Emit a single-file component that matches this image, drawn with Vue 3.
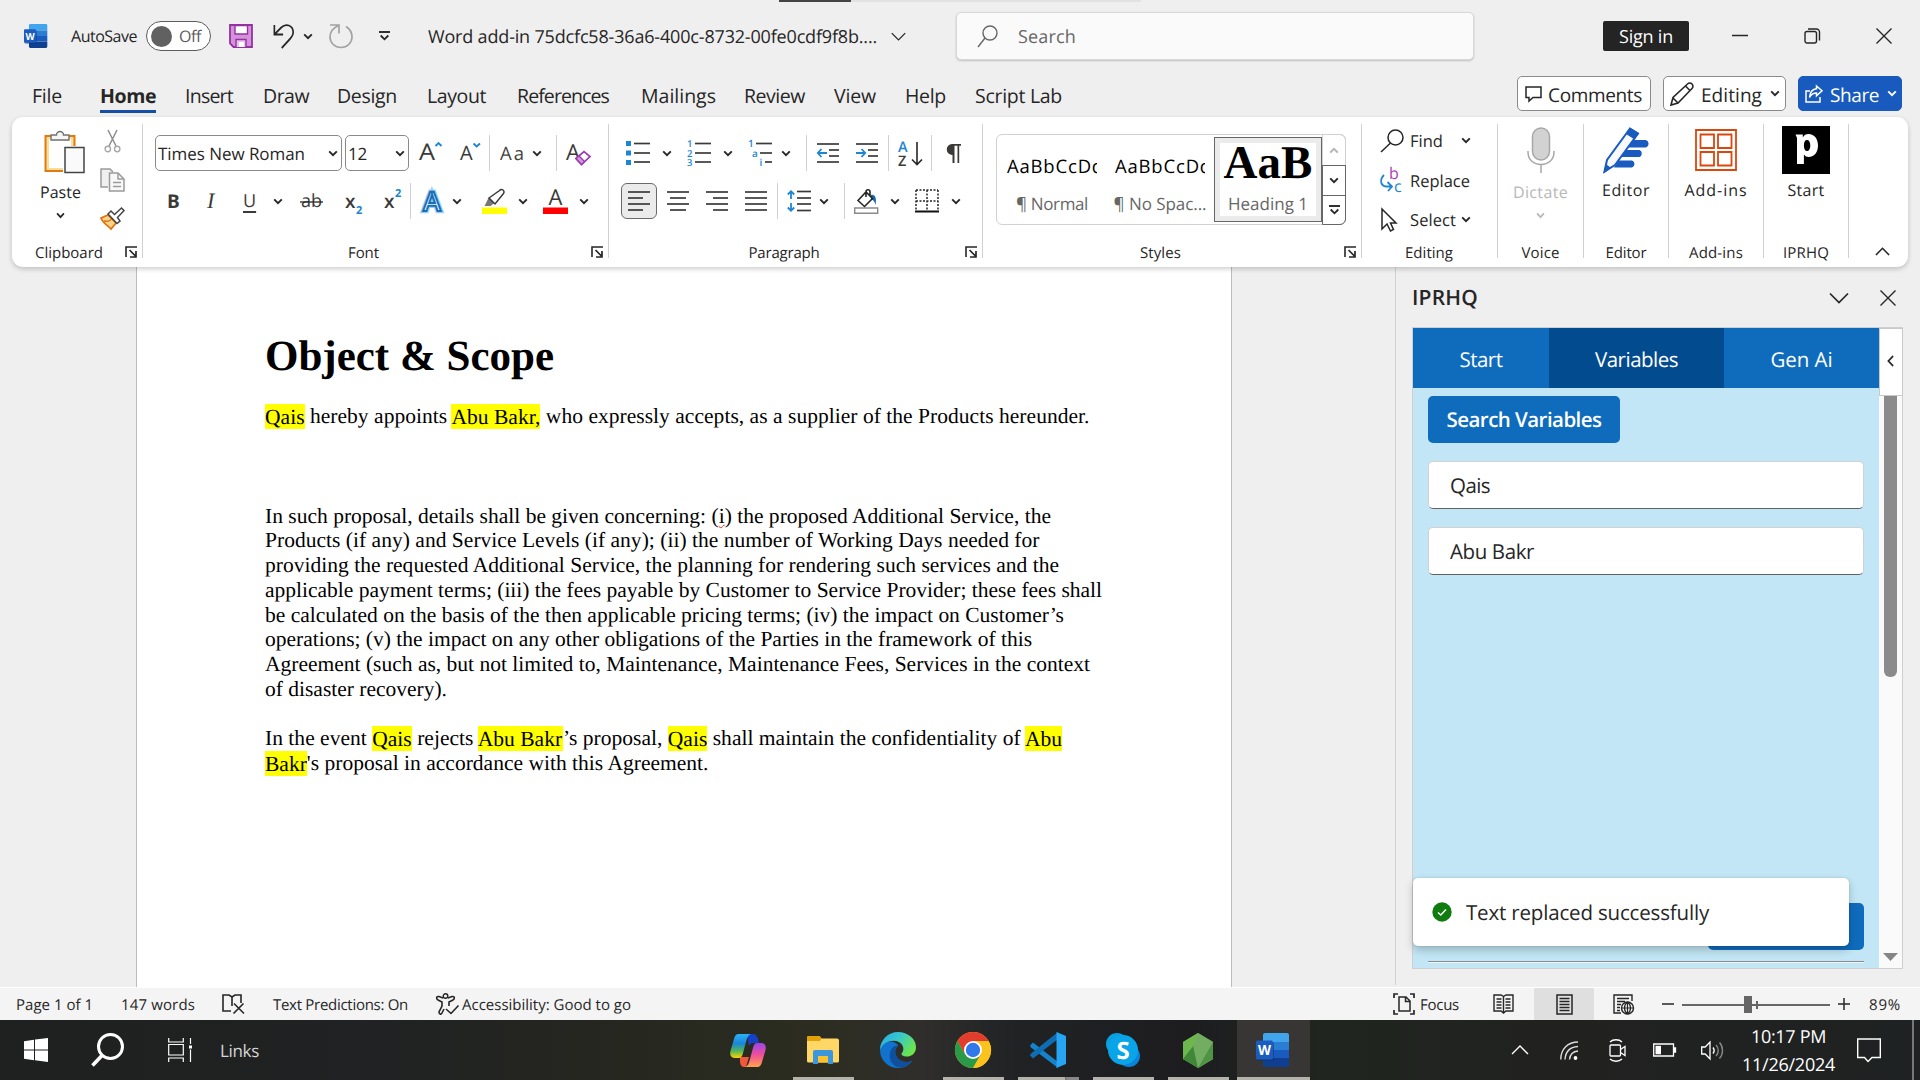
<script setup>
import { h } from 'vue'

// Spreads a label's letters so that it fills the given width.
const vFit = {
  mounted(el, { value }) {
    const width = el.getBoundingClientRect().width
    el.style.letterSpacing = (value - width) / el.textContent.length + 'px'
  }
}

const bars = (rows) => rows.map(([x1, x2, y]) => `<path d="M${x1} ${y}H${x2}" stroke="#3b3a39" stroke-width="1.7"/>`).join('')
const sans = 'font-family="Open Sans, Noto Sans, sans-serif" stroke="none"'
const wordLogo = `<g stroke="none"><path d="M9 0h22a2 2 0 0 1 2 2v7H7V2a2 2 0 0 1 2-2z" fill="#41a5ee"/><path d="M7 9h26v8H7z" fill="#2b7cd3"/><path d="M7 17h26v8H7z" fill="#185abd"/><path d="M7 25h26v7a2 2 0 0 1-2 2H9a2 2 0 0 1-2-2z" fill="#103f91"/><rect x="1" y="9" width="17" height="19" rx="1.5" fill="#0b2f6e" opacity=".5"/><rect x="0" y="7.500" width="17" height="19" rx="1.500" fill="#1b5cbe"/></g><text x="8.500" y="22" text-anchor="middle" font-weight="700" font-size="14" textLength="13" lengthAdjust="spacingAndGlyphs" fill="#fff" ${sans}>W</text>`

const icons = {
  chev: ['10 7', '<path d="M1.200 1.300L5 5.200L8.800 1.300" stroke-width="1.900"/>'],
  wide: ['20 12', '<path d="M1 1.500L10 10.500L19 1.500" stroke-width="1.700"/>'],
  word: ['34 34', wordLogo],
  save: ['24 24', '<path d="M1 1h22v22H4.500L1 19.500z" fill="#d591dc" stroke="#9332a0" stroke-width="1.800"/><path d="M6 1.500h12.500V10H6z" fill="#fff" stroke="#9332a0"/><path d="M7 23v-7.500h10V23" fill="#e9c3ee" stroke="#9332a0"/><path d="M10 18h5v5h-5z" fill="#fff" stroke="none"/>'],
  undo: ['24 24', '<path d="M1.500 1v9.500H11M1.500 10.500L9 3.500C14-1 22 1 22 8.500c0 3-2 5-4 7L9.500 24" stroke-width="1.800"/>'],
  redo: ['24 24', '<path d="M1 1h9v8.500M9.500 1.500C4 4 1 8 1 13c0 6 5 10.500 11 10.500S23 19 23 13c0-4-2-8-6-10.500" stroke-width="1.700"/>'],
  custom: ['11 10', '<path d="M0 1h11" stroke-width="1.900"/><path d="M1.700 4.500L5.500 8.300L9.300 4.500" stroke-width="1.800"/>'],
  search: ['21 23', '<circle cx="13" cy="8" r="7"/><path d="M8 13L1 22"/>'],
  mini: ['16 16', '<path d="M0 7.500h16" stroke-width="1.500"/>'],
  restore: ['16 16', '<rect x="1" y="3.500" width="11.500" height="11.500" rx="2"/><path d="M4 1h8.500a3 3 0 0 1 3 3v8.500"/>'],
  close: ['16 16', '<path d="M.5.5l15 15M15.500.5L.5 15.500"/>'],
  comment: ['17 16', '<path d="M1 1h15v10.500H8L4 15v-3.500H1z" stroke-width="1.500"/>'],
  pencil: ['24 24', '<path d="M1 23l2-7.500L17.500 2a3 3 0 0 1 4.500 4.500L8 21zM15.500 4L20 8.500M3 16l5 5" stroke-width="1.600"/>'],
  share: ['18 18', '<path d="M5 6H1v11h14v-5M11.500 1l5.500 4.700-5.500 5V8C8 8 6 9.500 4.500 12.500 5 7.500 7 4 11.500 3.700z" stroke-width="1.500"/>'],
  paste: ['41 45', '<rect x="1.500" y="7" width="29" height="35" fill="#f8dd9c" stroke="#e27a0d" stroke-width="2"/><rect x="5" y="10" width="22" height="29" fill="#fff" stroke="none"/><path d="M7 11V6h5.500a3.500 3.500 0 0 1 7 0H25v5z" fill="#f6f6f6" stroke="#707070"/><path d="M19 17h22v28H19z" fill="#fff" stroke="none"/><path d="M21 18.500h19v25H21z" fill="#fafafa" stroke="#444" stroke-width="1.500"/>'],
  cut: ['17 24', '<path d="M4 1l8 16M13 1L5 17" stroke="#8c8c8c" stroke-width="1.500"/><circle cx="3.800" cy="20" r="2.700" stroke="#a8a8a8"/><circle cx="13.200" cy="20" r="2.700" stroke="#a8a8a8"/>'],
  copy: ['25 24', '<path d="M8 19H1V1h9l3 3" fill="#f0f0f0" stroke="#9b9b9b" stroke-width="1.500"/><path d="M9.500 5H18l6 6v12H9.500z" fill="#f8f8f8" stroke="#9b9b9b" stroke-width="1.500"/><path d="M18 5v6h6M13 14.500h8M13 18.500h8" stroke="#9b9b9b"/>'],
  painter: ['25 23', '<path d="M1 11l7-3 8 8-5 6C9 19 3 17 1 11z" fill="#f8d48a" stroke="#e2700d" stroke-width="1.700"/><path d="M4 14c5 1 7-1 8-3" stroke="#e2700d"/><path d="M8 7l3-3 3.500 3.500L21.500 1l2.500 2.500-6.500 7L20 14l-3 2.500z" fill="#fff" stroke="#444" stroke-width="1.500"/>'],
  launcher: ['12 12', '<path d="M1 11V1h11" stroke-width="1.600"/><path d="M4.500 4l6.500 6.500M11 5v6H5" stroke-width="1.700"/>'],
  grow: ['23 20', `<text x="0" y="19" font-size="23" fill="#3b3a39" textLength="16" lengthAdjust="spacingAndGlyphs" ${sans}>A</text><path d="M16.500 5L19.500 2L22.500 5" stroke="#1e86d0" stroke-width="1.900"/>`],
  shrink: ['21 20', `<text x="0" y="19" font-size="20" fill="#3b3a39" ${sans}>A</text><path d="M13.500 2.500L16.700 5.500L20 2.500" stroke="#1e86d0" stroke-width="1.900"/>`],
  clear: ['26 25', `<text x="0" y="19" font-size="22" fill="#3b3a39" ${sans}>A</text><path d="M10 17.500L18 10.500l6 5-8.500 8z" fill="#fff" stroke="#9b3bb0" stroke-width="1.700"/><path d="M10 17.500l3-2.500 5.500 5.500-3 3z" fill="#d59ae0" stroke="#9b3bb0"/>`],
  fancyA: ['24 25', `<g text-anchor="middle" font-size="27" font-weight="600" font-family="Open Sans, sans-serif" fill="#fff"><text x="12" y="22" stroke="#9dcdf3" stroke-width="4.500">A</text><text x="12" y="22" stroke="#1570b8" stroke-width="2">A</text></g>`],
  marker: ['25 25', '<path d="M0 18.500h25V25H0z" fill="#ff0" stroke="none"/><path d="M2.500 17l4-8 6 5-4 3z" fill="#777" stroke="none"/><path d="M7 9L17.500 1.500a2.500 2.500 0 0 1 4 3L13 15z" stroke="#3b3a39" stroke-width="1.500" fill="#fff"/>'],
  fontColor: ['25 25', `<path d="M0 18.500h25V25H0z" fill="red" stroke="none"/><text x="12.500" y="16" text-anchor="middle" font-size="22" fill="#3b3a39" ${sans}>A</text>`],
  strike: ['23 20', `<text x="11.500" y="16" text-anchor="middle" font-size="18" fill="#3b3a39" ${sans}>ab</text><path d="M0 11h23" stroke-width="1.300"/>`],
  bullets: ['24 24', '<path d="M0 0h5v5H0zM0 9.500h5v5H0zM0 19h5v5H0z" fill="#1e86d0" stroke="none"/>' + bars([[8, 24, 2.5], [8, 24, 12], [8, 24, 21]])],
  numbers: ['24 26', `<g fill="#1e86d0" font-size="9.500" font-weight="600" ${sans}><text x="0" y="7">1</text><text x="0" y="16.500">2</text><text x="0" y="26">3</text></g>` + bars([[8, 24, 3.5], [8, 24, 13], [8, 24, 22]])],
  levels: ['24 26', `<g fill="#1e86d0" font-size="10" font-weight="600" ${sans}><text x="0" y="7">1</text><text x="4" y="16.500">a</text><text x="11.500" y="26">i</text></g>` + bars([[8, 24, 3.5], [12, 24, 13], [17, 24, 22]])],
  outdent: ['22 20', bars([[0, 22, 1], [12, 22, 7], [12, 22, 13], [0, 22, 19]]) + '<path d="M10 10H1M4.500 6L.8 10l3.700 4" stroke="#1e86d0" stroke-width="1.800"/>'],
  indent: ['22 20', bars([[0, 22, 1], [12, 22, 7], [12, 22, 13], [0, 22, 19]]) + '<path d="M0 10h9M5.500 6l3.700 4-3.700 4" stroke="#1e86d0" stroke-width="1.800"/>'],
  sort: ['25 25', `<g font-size="14.500" font-weight="600" ${sans}><text x="0" y="11" fill="#1e86d0">A</text><text x="0" y="25" fill="#3b3a39">Z</text></g><path d="M19 1v22M14 18.500l5 5 5-5" stroke-width="1.600"/>`],
  pilcrow: ['16 19', '<path d="M7.500 11A5.500 5.500 0 0 1 7 0h9v1.800h-1.800V19H12.500V1.800h-3V19H7.500z" fill="#3b3a39" stroke="none"/>'],
  left: ['22 20', bars([[0, 22, 1], [0, 15, 7], [0, 22, 13], [0, 15, 19]])],
  center: ['22 20', bars([[0, 22, 1], [3, 19, 7], [0, 22, 13], [3, 19, 19]])],
  right: ['22 20', bars([[0, 22, 1], [7, 22, 7], [0, 22, 13], [7, 22, 19]])],
  justify: ['22 20', bars([[0, 22, 1], [0, 22, 7], [0, 22, 13], [0, 22, 19]])],
  spacing: ['24 22', '<path d="M4 1v8M4 13v8M.8 4.500L4 1.200l3.200 3.300M.8 17.500L4 20.800l3.200-3.300" stroke="#1e86d0" stroke-width="1.800"/>' + bars([[10, 24, 1.500], [10, 24, 8], [10, 24, 14], [10, 24, 20.500]])],
  bucket: ['25 25', '<path d="M.7 19h23v5.300h-23z" stroke="#8a8a8a"/><path d="M17 6c4-1 6 3 4.500 10-1-4-2-5-4.500-5.500z" fill="#1669b5" stroke="none"/><path d="M4 11.500l8-8.500 6.500 6.500-8 8zM12 8V3c0-3 4-3 4 0v4" stroke-width="1.600"/>'],
  borders: ['24 24', '<path d="M1 1h22M1 12h22M1 1v21M12 1v21M23 1v21" stroke-dasharray="2 1.500" stroke-width="1.500"/><path d="M0 22.500h24" stroke="#111" stroke-width="2"/>'],
  find: ['24 24', '<circle cx="15.500" cy="8.500" r="7.500" stroke-width="1.500"/><path d="M10.500 14L1 23" stroke-width="1.500"/>'],
  replace: ['22 26', `<text x="9" y="12" font-size="16" fill="#a743b8" ${sans}>b</text><text x="14" y="25" font-size="16" fill="#1e86d0" ${sans}>c</text><path d="M4 8C-1 13 1 19 6 19.500h5M7.500 15l4.500 4.500-4 4.500" stroke="#1e86d0" stroke-width="1.800"/>`],
  select: ['17 24', '<path d="M2 1v20l5-5 3.500 7 3-1.500L10.500 15H16z" stroke-width="1.500"/>'],
  mic: ['28 46', '<rect x="5.500" y="1" width="17" height="32" rx="8.500" fill="#d2d2d2" stroke="#a8a8a8" stroke-width="1.500"/><path d="M1 24v1c0 8 6 12.500 13 12.500S27 33 27 25v-1M14 38v8" stroke="#a8a8a8" stroke-width="1.500"/>'],
  editor: ['47 46', '<path d="M27 13h16a4 4 0 0 1 0 7.500H23zM22 23h14.500a3.800 3.800 0 0 1 0 7H18zM16 33.500h13a3.700 3.700 0 0 1 0 7H11z" fill="#1a5bbf" stroke="none"/><path d="M1.500 44.500L4 33 27 1.500l8 5L12 38z" fill="#f7f9fc" stroke="#1a5bbf" stroke-width="2"/><path d="M27 1.500l8 5-3.500 5-8-5zM1.500 45l1.500-7 4 3z" fill="#1a5bbf" stroke="#1a5bbf"/>'],
  addins: ['42 42', '<g stroke="#d9480f" stroke-width="1.800"><path d="M1 1h40v40H1zM5.500 5.500h13.500v13.500H5.500zM23 5.500h13.500v13.500H23zM5.500 23h13.500v13.500H5.500zM23 23h13.500v13.500H23z"/></g>'],
  prh: ['48 48', '<path d="M0 0h48v48H0z" fill="#000" stroke="none"/><path d="M15 8.500h5.800v3C22 9 24 8 26.500 8c6 0 9.500 5 9.500 11.500S32.500 31 26.700 31c-2 0-3.700-.8-4.800-2.500V38h-6.900V12l-1.500-3.500zM25 14c-2 0-3.100 2-3.100 5.500S23 25 25 25s3.300-2 3.300-5.500S27 14 25 14z" fill="#fff" fill-rule="evenodd" stroke="none"/>'],
  up: ['16 10', '<path d="M1 9l7-7.500L15 9" stroke-width="1.700"/>'],
  back: ['8 12', '<path d="M7 1L1.500 6 7 11" stroke-width="1.700"/>'],
  check: ['20 20', '<circle cx="10" cy="10" r="9.700" fill="#107c10" stroke="none"/><path d="M6 10.500L8.800 13 14 7.500" stroke="#fff" stroke-width="1.500"/>'],
  down: ['16 8', '<path d="M0 0h16L8 8z" fill="#858585" stroke="none"/>'],
  proof: ['23 20', '<path d="M9 17H1V1h6l3 2 3-2h6v8M10 3v9" stroke-width="1.600"/><path d="M12 9.500l10 10M21.500 9.500l-10 10" stroke-width="1.600"/>'],
  access: ['23 22', '<circle cx="9.500" cy="3" r="2.300"/><path d="M7 5L3 3.500C0 3 0 6 2 7l4 2v4l-3 6c0 2 2 3 3 1l2-4M12 5l4-1.500c3-.5 3 2.500 1 3.500l-4 2v4M10 16l5 4.500 7.500-8" stroke-width="1.600"/>'],
  focus: ['22 22', '<path d="M1 5V1h4M17 1h4v4M1 17v4h4M17 21h4v-4" stroke-width="1.700"/><path d="M6 4h7l4 4v10H6zM12.500 4v4.500H17" stroke-width="1.500"/>'],
  read: ['21 20', '<path d="M10.500 2.500L8 1H1v16h7l2.500 2 2.500-2h7V1h-7zM10.500 2.500V19M3.500 5h5M3.500 8h5M3.500 11h5M3.500 14h5M12.500 5h5M12.500 8h5M12.500 11h5M12.500 14h5" stroke-width="1.400"/>'],
  print: ['17 21', '<path d="M1 1h15v19H1zM3.500 4.500h10M3.500 7.500h10M3.500 10.500h10M3.500 13.500h10M3.500 16.500h10" stroke-width="1.500"/>'],
  web: ['22 21', '<path d="M8 19H1V1h18v6M4 4.500h12M4 7.500h8M4 10.500h4M4 13.500h3M4 16.500h3" stroke-width="1.400"/><circle cx="14.500" cy="14" r="6"/><path d="M8.500 14h12M14.500 8v12M14.500 8c-4 3-4 9 0 12M14.500 8c4 3 4 9 0 12" stroke-width="1.200"/>'],
  minus: ['12 12', '<path d="M0 6h12" stroke-width="1.500"/>'],
  plus: ['12 12', '<path d="M0 6h12M6 0v12" stroke-width="1.500"/>'],
  win: ['24 24', '<path d="M0 3.200l10-1.400V11.500H0zM11 1.600L24 0v11.500H11zM0 12.500h10v9.700L0 20.800zM11 12.500h13V24l-13-1.700z" fill="#fff" stroke="none"/>'],
  bigSearch: ['33 34', '<circle cx="19.500" cy="13.500" r="12" stroke="#fff" stroke-width="3"/><path d="M11 22.500L1.500 32.500" stroke="#fff" stroke-width="3.600"/>'],
  tasks: ['24 24', '<path d="M.7 0v4h14.600V0M.7 6.500h14.600v10.500H.7zM.7 24v-4h14.600v4M22.500 0v6M22.500 11.500V24" stroke="#fff" stroke-width="1.200"/><path d="M21 7.500h3v3h-3z" fill="#fff" stroke="none"/>'],
  trayUp: ['18 10', '<path d="M1 9l8-8 8 8" stroke="#fff" stroke-width="1.400"/>'],
  wifi: ['18 19', '<g stroke="#ddd" stroke-width="1.400"><path d="M.8 18.500C.8 8 8 1 18 1M5 18.500C5.500 11 10 6 18 5.500M9.500 18.500c.5-5 3-8 8.500-8.500"/></g><circle cx="15.500" cy="17" r="1.900" fill="#fff" stroke="none"/>'],
  camera: ['17 23', '<g stroke="#fff" stroke-width="1.300"><rect x="1" y="6" width="10.500" height="11" rx="1"/><path d="M11.500 10.500L16 7.500v9l-4.500-3M1 3c3-3 9-3 12 0M1 20c3 3 9 3 12 0"/></g>'],
  battery: ['23 14', '<path d="M.7 1h19.800v12H.7zM21.500 5v4h1V5z" stroke="#fff" stroke-width="1.300"/><path d="M2.500 2.800H8v8.500H2.500z" fill="#fff" stroke="none"/>'],
  speaker: ['23 19', '<path d="M.7 6h3.500L9 1v17l-4.800-5H.7z" stroke="#fff" stroke-width="1.300"/><path d="M12 6.500c1.500 2 1.500 4 0 6" stroke="#fff"/><path d="M15 4c3 3 3 8 0 11M18.500 1.500c4 4.500 4 11.500 0 16" stroke="#888"/>'],
  note: ['24 25', '<path d="M.7 1h22.600v18.500H15L11 23.500 7.500 19.500H.7z" stroke="#fff" stroke-width="1.400"/>'],
  copilot: ['36 34', '<defs><linearGradient id="cpa" x1="0" y1="0" x2="0" y2="1"><stop offset="0" stop-color="#2bb2f5"/><stop offset=".4" stop-color="#1a86d9"/><stop offset=".7" stop-color="#52b45c"/><stop offset="1" stop-color="#ffd400"/></linearGradient><linearGradient id="cpb" x1="0" y1="0" x2="0" y2="1"><stop offset="0" stop-color="#9a45ec"/><stop offset=".5" stop-color="#f14f97"/><stop offset="1" stop-color="#ffa34d"/></linearGradient></defs><g stroke="none"><path d="M17 1h6c3 0 4 2 5 5l1 4h-6c-2 0-3 1-4 3z" fill="#1640c8"/><path d="M10 24h9l-3 10h-2c-3 0-3.500-3-4-5z" fill="#f2563b"/><path d="M9 1h12c-3 1-4 4-5 8l-3 11c-1 4-2 5-5 5H5c-4 0-5.500-3-4.500-7L4 6c1-3.500 2-5 5-5z" fill="url(#cpa)"/><path d="M27 34H15c3-1 4-4 5-8l3-11c1-4 2-5 5-5h3c4 0 5.500 3 4.500 7L32 29c-1 3.500-2 5-5 5z" fill="url(#cpb)"/></g>'],
  folder: ['32 28', '<g stroke="none"><path d="M0 1.500A1.500 1.500 0 0 1 1.500 0h11l2 2.500H30A2 2 0 0 1 32 4v21a1.500 1.500 0 0 1-1.500 1.500h-29A1.500 1.500 0 0 1 0 25z" fill="#ffd766"/><path d="M0 1.500A1.500 1.500 0 0 1 1.500 0h11l2 2.500L13 5H0z" fill="#e3a008"/><path d="M6 28V16a2 2 0 0 1 2-2h16a2 2 0 0 1 2 2v12h-5v-8H11v8z" fill="#3a96dd"/><path d="M11 20h10v6.500H11z" fill="#f9c22e"/></g>'],
  edge: ['36 36', '<defs><linearGradient id="eda" x1="0" y1="0" x2="1" y2=".5"><stop offset="0" stop-color="#2ba8e0"/><stop offset=".5" stop-color="#35c6d0"/><stop offset="1" stop-color="#6be450"/></linearGradient></defs><g stroke="none"><path d="M0 18a18 18 0 0 0 18 18c6 0 11-2.500 14.500-7.500-6 3-13 1.500-16-4-2.500-4.500-1-9 2-11C14 8 3 7 0 18z" fill="#1173ce"/><path d="M10 21c1-5 4-8 8.500-7.500-3 2-4.500 6.500-2 11 3 5.500 10 7 16 4C28 34 23 36 19 35.500 12 34 8.500 27 10 21z" fill="#0f509c"/><path d="M0 18C0 8 8 0 18 0s18 7 18 15c0 7-5 9.500-9 9.500s-6-1.500-5.500-3c2-2 2.500-5 1-8C19 6 4 7 0 18z" fill="url(#eda)"/></g>'],
  chrome: ['36 36', '<g stroke="none"><circle cx="18" cy="18" r="18" fill="#fbbc05"/><path d="M2.400 9A18 18 0 0 1 33.600 9H18L10.200 22.500z" fill="#e23c2f"/><path d="M2.400 9A18 18 0 0 0 18 36l7.800-13.500H10.200z" fill="#2a9a48"/><path d="M33.600 9H18l7.800 13.500L18 36A18 18 0 0 0 33.600 9z" fill="#fcc31c"/><circle cx="18" cy="18" r="9" fill="#fff"/><circle cx="18" cy="18" r="7.200" fill="#3178ea"/></g>'],
  code: ['36 36', '<g stroke="none"><path d="M0 13.500L3 10.500 28 30v6L1 15.500z" fill="#1583ca"/><path d="M0 23.500L3 26.500 28 7V0L1 21.500z" fill="#0f6db4"/><path d="M26.500 0L36 4v28l-9.500 4z" fill="#27a4f2"/></g>'],
  skype: ['34 34', '<g stroke="none"><circle cx="11" cy="11" r="11" fill="#0aa0e0"/><circle cx="23" cy="23" r="11" fill="#0a83d8"/><circle cx="17" cy="17" r="15" fill="#0aa5e9"/></g>' + `<text x="17" y="25.500" text-anchor="middle" font-size="24" font-weight="700" fill="#fff" ${sans}>S</text>`],
  node: ['30 35', '<g stroke="none"><path d="M15 0l15 9v17l-15 9-15-9V9z" fill="#58a248"/><path d="M15 0L0 9v17l8 4z" fill="#6cb84f"/><path d="M0 26l11-14 4 23z" fill="#41873a"/><path d="M15 0l15 9v17L15 35 10 13z" fill="#73ad62"/><path d="M30 9v17L15 35z" fill="#4f9445"/></g>']
}

const Ico = (p) => {
  const [box, body] = icons[p.n]
  const [w, ht] = box.split(' ')
  return h('svg', { width: p.w || w, height: p.h || ht, viewBox: '0 0 ' + box, fill: 'none', stroke: 'currentColor', 'stroke-width': 1.4, preserveAspectRatio: 'none', innerHTML: body })
}
Ico.props = ['n', 'w', 'h']

const tabs = [['File', 30], ['Home', 56], ['Insert', 48], ['Draw', 46], ['Design', 60], ['Layout', 59], ['References', 92], ['Mailings', 75], ['Review', 61], ['View', 42], ['Help', 41], ['Script Lab', 87]]

const clause = [
  ['Products (if any) and Service Levels (if any); (ii) the number of Working Days needed for', 774.5],
  ['providing the requested Additional Service, the planning for rendering such services and the', 794],
  ['applicable payment terms; (iii) the fees payable by Customer to Service Provider; these fees shall', 837],
  ['be calculated on the basis of the then applicable pricing terms; (iv) the impact on Customer’s', 799],
  ['operations; (v) the impact on any other obligations of the Parties in the framework of this', 767],
  ['Agreement (such as, but not limited to, Maintenance, Maintenance Fees, Services in the context', 825],
  ['of disaster recovery).', 182]
]

const apps = [
  { n: 'copilot' }, { n: 'folder', open: true }, { n: 'edge' }, { n: 'chrome', open: true },
  { n: 'code', open: true, many: true }, { n: 'skype', open: true }, { n: 'node', open: true }, { n: 'word', active: true }
]
</script>

<template>
  <div class="screen">
    <header class="titlebar">
      <Ico n="word" w="24" h="24" />
      <span v-fit="66" class="t16">AutoSave</span>
      <div class="toggle"><i></i><span v-fit="22" class="t16">Off</span></div>
      <Ico n="save" />
      <Ico n="undo" w="22" />
      <Ico n="chev" />
      <Ico n="redo" class="faded" />
      <Ico n="custom" />
      <span v-fit="449" class="t18">Word add-in 75dcfc58-36a6-400c-8732-00fe0cdf9f8b....</span>
      <Ico n="wide" w="15" h="9" />
      <div class="searchbox"><Ico n="search" /><span v-fit="58" class="t18">Search</span></div>
      <div class="signin"><span v-fit="54" class="t18">Sign in</span></div>
      <Ico n="mini" /><Ico n="restore" /><Ico n="close" />
      <div class="handle"><i></i></div>
    </header>

    <nav class="menu">
      <span v-for="t in tabs" :key="t[0]" v-fit="t[1]" class="tab" :class="{ on: t[0] === 'Home' }">{{ t[0] }}</span>
      <div class="mbtn comments"><Ico n="comment" /><span v-fit="94">Comments</span></div>
      <div class="mbtn editing"><Ico n="pencil" /><span v-fit="61">Editing</span><Ico n="chev" /></div>
      <div class="mbtn share"><Ico n="share" /><span v-fit="49">Share</span><Ico n="chev" /></div>
    </nav>

    <section class="ribbon">
      <div class="group clipboard">
        <div class="clip">
          <div class="big paste"><Ico n="paste" /><span v-fit="41" class="t16">Paste</span><Ico n="chev" w="9" /></div>
          <div class="clipicons"><Ico n="cut" /><Ico n="copy" /><Ico n="painter" /></div>
        </div>
        <footer class="foot"><span v-fit="68">Clipboard</span><Ico n="launcher" class="launch" /></footer>
      </div>

      <div class="group font">
        <div class="row f1">
          <div class="combo name"><span v-fit="147">Times New Roman</span><Ico n="chev" /></div>
          <div class="combo size"><span v-fit="19">12</span><Ico n="chev" /></div>
          <Ico n="grow" class="raise" /><Ico n="shrink" class="raise" /><i class="bar"></i>
          <span v-fit="26" class="aa">Aa</span><Ico n="chev" /><i class="bar"></i><Ico n="clear" />
        </div>
        <div class="row f2">
          <b class="glyph">B</b><i class="glyph ital">I</i><span class="glyph under">U</span><Ico n="chev" />
          <Ico n="strike" /><span class="glyph xx">x<sub>2</sub></span><span class="glyph xx">x<sup>2</sup></span><i class="bar"></i>
          <Ico n="fancyA" /><Ico n="chev" /><Ico n="marker" /><Ico n="chev" /><Ico n="fontColor" /><Ico n="chev" />
        </div>
        <footer class="foot"><span v-fit="31">Font</span><Ico n="launcher" class="launch" /></footer>
      </div>

      <div class="group para">
        <div class="row p1">
          <Ico n="bullets" /><Ico n="chev" /><Ico n="numbers" /><Ico n="chev" /><Ico n="levels" /><Ico n="chev" /><i class="bar"></i>
          <Ico n="outdent" /><Ico n="indent" /><i class="bar"></i><Ico n="sort" /><i class="bar"></i><Ico n="pilcrow" />
        </div>
        <div class="row p2">
          <div class="pressed"><Ico n="left" /></div><Ico n="center" /><Ico n="right" /><Ico n="justify" /><i class="bar"></i>
          <Ico n="spacing" /><Ico n="chev" /><i class="bar"></i><Ico n="bucket" /><Ico n="chev" /><Ico n="borders" /><Ico n="chev" />
        </div>
        <footer class="foot"><span v-fit="71">Paragraph</span><Ico n="launcher" class="launch" /></footer>
      </div>

      <div class="group styles">
        <div class="gallery">
          <div class="style"><div class="sample"><span v-fit="97">AaBbCcDd</span></div><span v-fit="72" class="sname">¶ Normal</span></div>
          <div class="style"><div class="sample"><span v-fit="97">AaBbCcDd</span></div><span v-fit="93" class="sname">¶ No Spac...</span></div>
          <div class="style picked"><div class="head">AaB</div><span v-fit="80" class="sname">Heading 1</span></div>
          <div class="scroll"><div class="off"><Ico n="chev" class="flip" /></div><div><Ico n="chev" /></div><div><Ico n="custom" /></div></div>
        </div>
        <footer class="foot"><span v-fit="41">Styles</span><Ico n="launcher" class="launch" /></footer>
      </div>

      <div class="group edit">
        <div class="erow"><Ico n="find" /><span v-fit="33">Find</span><Ico n="chev" /></div>
        <div class="erow"><Ico n="replace" /><span v-fit="60">Replace</span></div>
        <div class="erow"><Ico n="select" /><span v-fit="46">Select</span><Ico n="chev" /></div>
        <footer class="foot"><span v-fit="48">Editing</span></footer>
      </div>
      <div class="group voice">
        <div class="big dim"><Ico n="mic" /><span v-fit="55" class="t16">Dictate</span><Ico n="chev" w="9" /></div>
        <footer class="foot"><span v-fit="38">Voice</span></footer>
      </div>
      <div class="group ed">
        <div class="big"><Ico n="editor" /><span v-fit="48" class="t16">Editor</span></div>
        <footer class="foot"><span v-fit="41">Editor</span></footer>
      </div>
      <div class="group add">
        <div class="big"><Ico n="addins" /><span v-fit="63" class="t16">Add-ins</span></div>
        <footer class="foot"><span v-fit="54">Add-ins</span></footer>
      </div>
      <div class="group ipr">
        <div class="big"><Ico n="prh" /><span v-fit="37" class="t16">Start</span></div>
        <footer class="foot"><span v-fit="46">IPRHQ</span></footer>
      </div>
      <div class="collapse"><Ico n="up" w="15" h="9" /></div>
    </section>

    <main class="work">
      <div class="canvas">
        <article class="page">
          <h1 v-fit="289">Object &amp; Scope</h1>
          <p class="line first" v-fit="824.5"><mark>Qais</mark> hereby appoints <mark>Abu Bakr,</mark> who expressly accepts, as a supplier of the Products hereunder.</p>
          <p class="line second" v-fit="786">In such proposal, details shall be given concerning: (<u>i</u>) the proposed Additional Service, the</p>
          <p v-for="l in clause" :key="l[0]" v-fit="l[1]" class="line">{{ l[0] }}</p>
          <p class="line third" v-fit="797">In the event <mark>Qais</mark> rejects <mark>Abu Bakr</mark>’s proposal, <mark>Qais</mark> shall maintain the confidentiality of <mark>Abu</mark></p>
          <p class="line" v-fit="443.5"><mark>Bakr</mark>'s proposal in accordance with this Agreement.</p>
        </article>
      </div>
      <aside class="pane">
        <div class="phead"><span v-fit="66">IPRHQ</span><Ico n="wide" /><Ico n="close" /></div>
        <div class="frame">
          <div class="content">
            <div class="ptabs">
              <div><span v-fit="43">Start</span></div>
              <div class="cur"><span v-fit="83">Variables</span></div>
              <div><span v-fit="62">Gen Ai</span></div>
            </div>
            <div class="body">
              <div class="find"><span v-fit="155">Search Variables</span></div>
              <div class="field"><span v-fit="40">Qais</span></div>
              <div class="field"><span v-fit="84">Abu Bakr</span></div>
              <div class="hidden-btn"></div>
              <div class="rule"></div>
            </div>
          </div>
          <div class="track">
            <div class="tip"><Ico n="back" w="7" /></div>
            <div class="thumb"></div>
            <Ico n="down" w="15" />
          </div>
          <div class="toast"><Ico n="check" /><span v-fit="243">Text replaced successfully</span></div>
        </div>
      </aside>
    </main>

    <div class="status">
      <span v-fit="77">Page 1 of 1</span>
      <span v-fit="74">147 words</span>
      <Ico n="proof" />
      <span v-fit="135">Text Predictions: On</span>
      <Ico n="access" />
      <span v-fit="169">Accessibility: Good to go</span>
      <Ico n="focus" />
      <span v-fit="39">Focus</span>
      <Ico n="read" />
      <div class="view"><Ico n="print" /></div>
      <Ico n="web" />
      <Ico n="minus" />
      <div class="slider"><i></i><b></b></div>
      <Ico n="plus" />
      <span v-fit="32">89%</span>
    </div>

    <div class="taskbar">
      <div class="tleft">
        <Ico n="win" /><Ico n="bigSearch" /><Ico n="tasks" /><span v-fit="39">Links</span>
      </div>
      <div class="apps">
        <div v-for="a in apps" :key="a.n" class="app" :class="{ open: a.open, active: a.active, many: a.many }"><Ico :n="a.n" /></div>
      </div>
      <div class="tray">
        <Ico n="trayUp" /><Ico n="wifi" /><Ico n="camera" /><Ico n="battery" /><Ico n="speaker" />
        <div class="clock"><span v-fit="75">10:17 PM</span><span v-fit="93">11/26/2024</span></div>
        <Ico n="note" /><i class="peek"></i>
      </div>
    </div>
  </div>
</template>

<style>
body { margin: 0; overflow: hidden; }
</style>

<style scoped>
* { box-sizing: border-box; }
.screen { width: 1920px; height: 1080px; display: flex; flex-direction: column; background: #efefef; color: #262626; font-family: "Open Sans", "Noto Sans", sans-serif; text-rendering: geometricPrecision; overflow: hidden; }
svg { display: block; flex: none; overflow: visible; }
span { white-space: nowrap; width: max-content; }
.t16 { font-size: 16px; }
.t18 { font-size: 18px; padding-top: 1px; }

.titlebar { position: relative; height: 72px; padding-left: 24px; display: grid; grid-template-columns: 47px 75px 83px 44px 30px 26px 50px 49px 463px 65px 647px 129px 72px 72px 44px; grid-template-rows: 72px; align-items: center; justify-items: start; }
.toggle { width: 65px; height: 30px; border: 1.5px solid #5c5c5c; border-radius: 15px; background: #fff; display: flex; align-items: center; gap: 7px; padding-left: 4px; color: #5c5c5c; }
.toggle i { width: 21px; height: 21px; border-radius: 50%; background: #616161; }
.faded { color: #a3a3a3; }
.searchbox { width: 518px; height: 48px; background: #fafafa; border: 1px solid #d8d8d8; border-radius: 5px; box-shadow: 0 1px 2px rgba(0,0,0,.2); display: flex; align-items: center; gap: 20px; padding-left: 20px; color: #666; }
.signin { width: 86px; height: 30px; border-radius: 2px; background: #242424; color: #fff; display: flex; align-items: center; justify-content: center; }
.handle { position: absolute; left: 779px; top: 0; width: 362px; height: 2px; background: #e2e2e2; }
.handle i { display: block; width: 72px; height: 2px; background: #444; }

.menu { height: 45px; padding: 4px 0 0 32px; display: grid; grid-template-columns: 68px 85px 78px 74px 90px 90px 124px 103px 90px 71px 70px 542px 146px 135px 104px; justify-items: start; align-items: start; }
.tab { font-size: 19.5px; line-height: 40px; height: 37px; }
.tab.on { font-weight: 700; border-bottom: 3px solid #174ea6; }
.mbtn { height: 35px; border: 1px solid #8a8a8a; border-radius: 5px; background: #fff; display: flex; align-items: center; font-size: 19px; padding-left: 7px; }
.mbtn span { padding-top: 2px; }
.comments { width: 134px; gap: 6px; }
.editing { width: 123px; gap: 7px; padding-left: 6px; }
.editing svg:last-child { margin-left: 1px; }
.share { width: 104px; gap: 7px; padding-left: 6px; background: #185abd; border-color: #185abd; color: #fff; }
.share svg:last-child { margin-left: 1px; }

.ribbon { position: relative; z-index: 2; height: 150px; flex: none; margin: 0 12px; padding: 7px 0 0; border-radius: 11px; background: #fff; box-shadow: 0 2px 5px rgba(0,0,0,.2); display: flex; }
.group { height: 134px; border-right: 1px solid #d1d1d1; display: flex; flex-direction: column; flex: none; }
.foot { position: relative; margin-top: auto; height: 12px; line-height: 14px; font-size: 15px; display: flex; justify-content: center; align-items: flex-start; }
.launch { position: absolute; right: 5px; top: 0; }
.clipboard { width: 131px; }
.clipboard .foot { padding-right: 21px; padding-left: 5px; }
.clip { display: flex; }
.big { display: flex; flex-direction: column; align-items: center; padding-top: 6px; }
.big span { line-height: 20px; margin-top: 7px; }
.paste { width: 64px; margin-left: 20px; padding-top: 5px; align-items: flex-start; padding-left: 12px; }
.paste span { margin: 8px 0 0 -4px; }
.paste svg:last-child { margin: 10px 0 0 12px; }
.clipicons { width: 25px; margin-left: 4px; padding-top: 5px; display: flex; flex-direction: column; align-items: center; gap: 15px; }

.row { height: 36px; display: grid; grid-template-rows: 36px; align-items: center; justify-items: start; margin-top: 12px; }
.row:first-child { margin-top: 11px; }
.bar { width: 1px; height: 36px; background: #d1d1d1; }
.font { width: 466px; }
.font .foot { padding-right: 24px; }
.f1 { padding-left: 12px; grid-template-columns: 190px 74px 41px 29px 11px 32px 24px 10px 40px; }
.f2 { padding-left: 24px; grid-template-columns: 40px 36px 30px 27px 45px 39px 26px 10px 32px 30px 36px 25px 36px 20px; }
.combo { height: 36px; border: 1px solid #8a8a8a; border-radius: 5px; display: flex; align-items: center; justify-content: space-between; padding: 0 3px 0 2px; font-size: 17px; }
.name { width: 187px; } .size { width: 64px; }
.raise { margin-bottom: 5px; }
.aa { font-size: 18.5px; color: #444; }
.glyph { font-size: 19px; line-height: 24px; color: #3b3a39; margin-top: -1px; }
.ital { font-family: "Liberation Serif", serif; font-size: 22px; }
.under { text-decoration: underline; text-underline-offset: 4px; text-decoration-thickness: 1.5px; font-size: 18px; }
.xx { position: relative; font-weight: 600; font-size: 19px; }
.xx sub, .xx sup { position: absolute; left: 11px; font-size: 11px; line-height: 11px; color: #1e86d0; font-weight: 700; }
.xx sub { top: 16px; } .xx sup { top: -1px; }

.para { width: 374px; }
.p1 { padding-left: 17px; grid-template-columns: 36px 25px 36px 25px 33px 25px 11px 39px 32px 10px 33px 14px 20px; }
.p2 { padding-left: 12px; grid-template-columns: 46px 39px 39px 32px 10px 32px 25px 10px 36px 25px 36px 12px; }
.pressed { width: 36px; height: 36px; border: 1px solid #6a6a6a; border-radius: 6px; background: #ebebeb; display: grid; place-items: center; }
.para .foot { padding-right: 23px; }

.styles { width: 379px; }
.gallery { width: 350px; height: 91px; margin: 10px 0 0 13px; border: 1px solid #d1d1d1; border-radius: 6px; display: flex; }
.style { width: 108px; height: 85px; margin-top: 2px; display: flex; flex-direction: column; align-items: center; }
.style:first-child { margin-left: 1px; }
.sample { width: 90px; overflow: hidden; font-size: 18.5px; line-height: 26px; margin-top: 17px; color: #000; }
.sample span { display: block; }
.sname { font-size: 17px; line-height: 20px; color: #666; margin-top: 14px; }
.picked { background: #fff; border: 1px solid #666; box-shadow: inset 0 0 0 5px #ebebeb; }
.head { font: 700 47px/50px "Liberation Serif", serif; color: #000; margin-top: 0; }
.picked .sname { margin-top: 6px; }
.scroll { width: 24px; margin-left: auto; display: flex; flex-direction: column; height: 91px; margin-top: -1px; margin-right: -1px; }
.scroll div { flex: 1; border: 1px solid #666; display: grid; place-items: center; margin-top: -1px; }
.scroll .off { border-color: #d1d1d1; color: #b3b3b3; margin-top: 0; border-radius: 0 6px 0 0; flex: 0 0 32px; }
.scroll div:last-child { border-radius: 0 0 6px 0; }
.flip { transform: scaleY(-1); }
.styles .foot { padding-right: 23px; }

.edit { width: 136px; }
.erow { height: 39.5px; display: grid; grid-template-columns: 30px 51px 20px; align-items: center; padding-left: 18px; font-size: 16.5px; justify-items: start; }
.edit .erow:first-child { margin-top: -3px; }
.edit svg { justify-self: start; }
.edit .foot { padding-right: 1px; }
.voice { width: 86px; } .ed { width: 85px; } .add { width: 95px; } .ipr { width: 85px; }
.voice .big { padding-top: 3px; color: #b8b8b8; }
.voice .big span { margin-top: 9px; }
.voice .big svg:last-child { margin-top: 10px; }
.ed .big { padding-top: 3px; } .ed .big span { margin-top: 7px; }
.add .big { padding-top: 5px; } .add .big span { margin-top: 9px; }
.ipr .big { padding-top: 2px; } .ipr .big span { margin-top: 6px; }
.collapse { padding: 123px 0 0 26px; }

.work { height: 720px; flex: none; display: flex; }
.canvas { width: 1395px; }
.page { width: 1096px; height: 720px; margin-left: 136px; padding: 65px 0 0 128px; background: #fff; border: solid #bdbdbd; border-width: 0 1px; color: #000; font-family: "Liberation Serif", serif; }
h1 { margin: 0; font-size: 43px; line-height: 50px; width: max-content; }
.line { margin: 0; font-size: 21.5px; line-height: 24.7px; white-space: nowrap; width: max-content; }
mark { background: #ff0; color: #000; padding: .5px 0; }
.line u { text-decoration: underline wavy #e8201e 1px; text-underline-offset: 1px; text-decoration-skip-ink: none; }
.first { margin-top: 22.300px; }
.second { margin-top: 74.700px; }
.third { margin-top: 25px; }

.pane { width: 525px; height: 718px; border-left: 1px solid #d1d1d1; }
.phead { height: 60px; padding: 2px 0 0 16px; display: grid; grid-template-columns: 417px 51px 20px; align-items: center; justify-items: start; font-size: 21px; font-weight: 600; }
.phead svg { margin-top: -1px; }
.frame { position: relative; width: 491px; height: 642px; margin-left: 16px; border: 1px solid #cfcfcf; display: flex; font-size: 20.5px; }
.content { width: 466px; background: #c2e6f5; display: flex; flex-direction: column; }
.ptabs { height: 60px; display: grid; grid-template-columns: 136px 175px 155px; color: #fff; background: #0f6cbd; font-weight: 500; }
.ptabs div { display: grid; place-items: center; padding-top: 3px; }
.ptabs .cur { background: #034b8f; }
.body { flex: 1; padding: 8px 15px 5px; display: flex; flex-direction: column; }
.find { width: 192px; height: 47px; border-radius: 5px; background: #0f6cbd; color: #fff; font-weight: 600; display: grid; place-items: center; padding-top: 1px; }
.field { height: 48px; margin-top: 18px; border: 1px solid #d1d1d1; border-bottom: 1.500px solid #616161; border-radius: 5px; background: #fff; display: flex; align-items: center; padding: 2px 0 0 21px; }
.hidden-btn { width: 156px; height: 47px; margin: auto 0 11px auto; background: #0f6cbd; border-radius: 5px; flex: none; }
.rule { height: 2px; background: #f2f2f2; border-top: 1px solid #8d8d8d; }
.track { width: 23px; background: #fafafa; display: flex; flex-direction: column; align-items: center; }
.tip { width: 24px; height: 68px; background: #fff; border: 1px solid #c9c9c9; display: grid; place-items: center; padding-bottom: 2px; }
.thumb { width: 13px; height: 281px; background: #8b8b8b; border-radius: 0 0 6px 6px; }
.track > svg { margin-top: auto; margin-bottom: 7px; }
.toast { position: absolute; left: 0; top: 550px; width: 436px; height: 68px; background: #fff; border-radius: 5px; box-shadow: 0 4px 9px rgba(0,0,0,.22), 0 0 2px rgba(0,0,0,.15); display: flex; align-items: center; gap: 14px; padding-left: 19px; font-weight: 500; }
.toast span { padding-top: 2px; }

.status { height: 33px; flex: none; border-top: 1px solid #fff; background: #f4f4f4; padding-left: 16px; display: grid; grid-template-columns: 105px 101px 51px 163px 26px 931px 27px 73px 41px 79px 49px 20px 156px 31px 50px; grid-template-rows: 32px; align-items: center; justify-items: start; font-size: 15px; }
.status > span { padding-top: 1px; }
.view { width: 60px; height: 32px; background: #dfdfdf; display: grid; place-items: center; }
.slider { position: relative; width: 148px; height: 17px; background: linear-gradient(#666, #666) 0 8px / 100% 2px no-repeat; }
.slider i { position: absolute; left: 62px; top: 0; width: 8px; height: 17px; background: #666; }
.slider b { position: absolute; left: 74px; top: 5px; width: 2px; height: 8px; background: #666; }

.taskbar { height: 60px; flex: none; display: flex; background: linear-gradient(90deg, #1e211f, #202223 20%, #26271f 33%, #2c2d20 42%, #2f2e2c 48%, #202224 53%, #1d1d20 62%, #20251f 69%, #212220 80%, #1f2222); color: #fff; }
.tleft { width: 710px; padding-left: 24px; display: grid; grid-template-columns: 67px 77px 52px 60px; align-items: center; justify-items: start; font-size: 17px; color: #d6d6d6; }
.apps { display: flex; width: 600px; }
.app { position: relative; width: 75px; display: grid; place-items: center; }
.app::after { content: ""; position: absolute; bottom: 0; left: 8px; width: 61px; height: 3px; }
.app.open::after { background: #b3b3ac; }
.app.many::after { background: linear-gradient(90deg, #b3b3ac 47px, #6b6b6b 47px, #888 49px); }
.app.active { background: linear-gradient(#383635, #383635) 2px 0 / 73px 100% no-repeat; }
.app.active::after { left: 2px; width: 73px; background: #b3b3ac; }
.tray { padding-left: 201px; display: grid; grid-template-columns: 49px 49px 44px 48px 41px 115px 55px 2px; align-items: center; justify-items: start; }
.clock { width: 93px; display: flex; flex-direction: column; align-items: center; font-size: 18px; line-height: 28px; padding-top: 1px; }
.peek { width: 2px; height: 60px; background: #777; }
</style>
